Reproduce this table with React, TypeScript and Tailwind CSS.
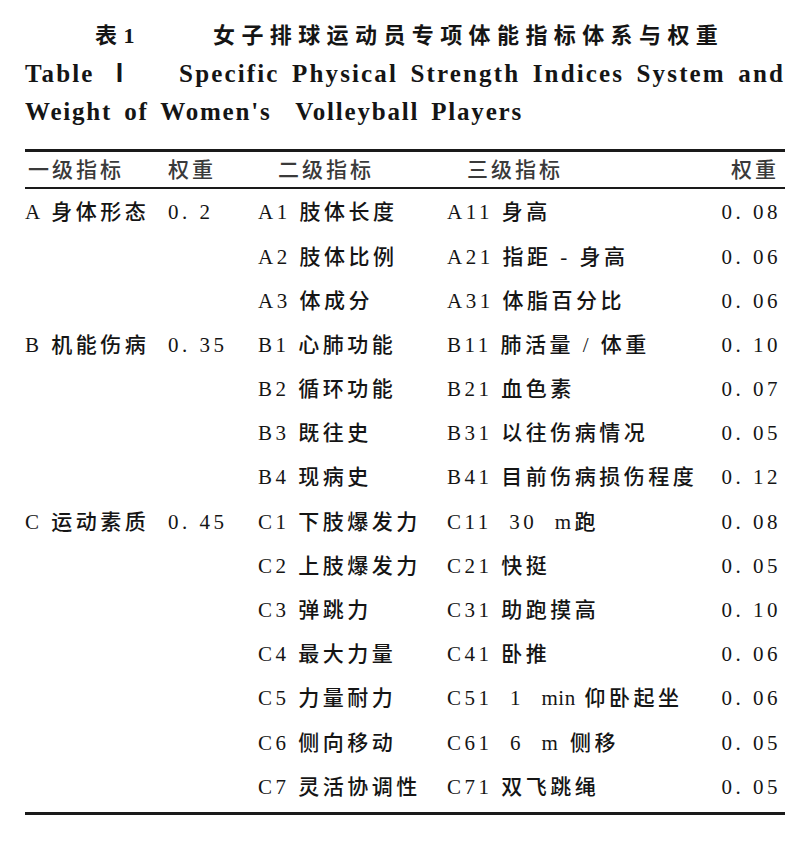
import React from "react";

const cjk = '"Liberation Serif", "Noto Sans CJK SC", serif';

type Row = [string, string, string, string, string];

const rows: Row[] = [
  ["A 身体形态", "0. 2", "A1 肢体长度", "A11 身高", "0. 08"],
  ["", "", "A2 肢体比例", "A21 指距 - 身高", "0. 06"],
  ["", "", "A3 体成分", "A31 体脂百分比", "0. 06"],
  ["B 机能伤病", "0. 35", "B1 心肺功能", "B11 肺活量 / 体重", "0. 10"],
  ["", "", "B2 循环功能", "B21 血色素", "0. 07"],
  ["", "", "B3 既往史", "B31 以往伤病情况", "0. 05"],
  ["", "", "B4 现病史", "B41 目前伤病损伤程度", "0. 12"],
  ["C 运动素质", "0. 45", "C1 下肢爆发力", "C11  30  m跑", "0. 08"],
  ["", "", "C2 上肢爆发力", "C21 快挺", "0. 05"],
  ["", "", "C3 弹跳力", "C31 助跑摸高", "0. 10"],
  ["", "", "C4 最大力量", "C41 卧推", "0. 06"],
  ["", "", "C5 力量耐力", "C51  1  min 仰卧起坐", "0. 06"],
  ["", "", "C6 侧向移动", "C61  6  m 侧移", "0. 05"],
  ["", "", "C7 灵活协调性", "C71 双飞跳绳", "0. 05"],
];

function Cell({ text }: { text: string }) {
  const parts = text.split(/(min)/);
  return (
    <>
      {parts.map((p, i) =>
        p === "min" ? (
          <span key={i} className="tracking-[0.5px]">
            {p}
          </span>
        ) : (
          <span key={i}>{p}</span>
        )
      )}
    </>
  );
}

export default function App() {
  return (
    <div
      className="w-[804px] h-[850px] bg-white text-[#151515] pl-[25px] pr-[19px] pt-[17px]"
      style={{ fontFamily: cjk }}
    >
      <div className="leading-[38px] font-bold">
        <div className="flex text-[22px] tracking-[6.4px]">
          <span className="ml-[70px] w-[118px]">表1</span>
          <span>女子排球运动员专项体能指标体系与权重</span>
        </div>
        <div className="flex text-[25px] tracking-[2.15px] [word-spacing:4px]">
          <span className="w-[155px] whitespace-pre">Table Ⅰ</span>
          <span className="whitespace-nowrap">Specific Physical Strength Indices System and</span>
        </div>
        <div className="text-[25px] tracking-[1.8px] [word-spacing:4px] whitespace-pre">
          Weight of Women's  Volleyball Players
        </div>
      </div>

      <div className="mt-[18px] border-t-[3px] border-[#1a1a1a]" />
      <div className="grid grid-cols-[143px_90px_189px_1fr_auto] h-[35px] pt-[3px] items-center text-[21px] tracking-[3px] font-medium text-[#3a3a3a]">
        <div className="pl-[3px]">一级指标</div>
        <div>权重</div>
        <div className="pl-[20px]">二级指标</div>
        <div className="pl-[20px]">三级指标</div>
        <div className="pr-[6px]">权重</div>
      </div>
      <div className="border-t-[2px] border-[#1a1a1a]" />

      <div className="grid grid-cols-[143px_90px_189px_1fr_auto] pt-[2px] pb-[2px] text-[21px] tracking-[3.5px] font-medium">
        {rows.map((r, i) => (
          <React.Fragment key={i}>
            <div className="h-[44.2px] flex items-center whitespace-pre">{r[0]}</div>
            <div className="h-[44.2px] flex items-center whitespace-pre">{r[1]}</div>
            <div className="h-[44.2px] flex items-center whitespace-pre">{r[2]}</div>
            <div className="h-[44.2px] flex items-center whitespace-pre">
              <Cell text={r[3]} />
            </div>
            <div className="h-[44.2px] flex items-center justify-end whitespace-pre pr-[4px]">{r[4]}</div>
          </React.Fragment>
        ))}
      </div>
      <div className="border-t-[3px] border-[#1a1a1a]" />
    </div>
  );
}
